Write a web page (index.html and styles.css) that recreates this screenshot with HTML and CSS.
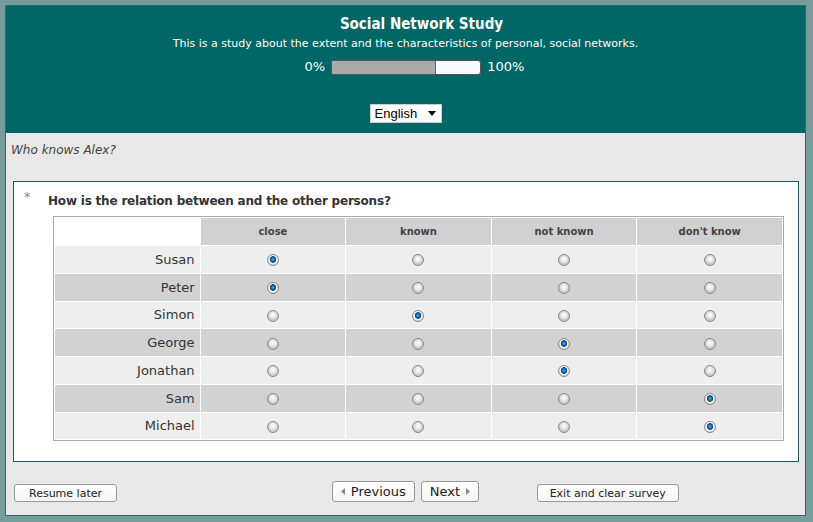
FILE: index.html
```html
<!DOCTYPE html>
<html>
<head>
<meta charset="utf-8">
<link rel="stylesheet" href="styles.css">
</head>
<body>
<div class="frame">
  <header class="head">
    <h1 class="title">Social Network Study</h1>
    <p class="desc">This is a study about the extent and the characteristics of personal, social networks.</p>
    <div class="progress">
      <span>0%</span>
      <div class="bar"><div class="fill" style="width:70%"></div></div>
      <span>100%</span>
    </div>
    <div class="lang">
      <span>English</span>
      <svg width="8" height="5" viewBox="0 0 8 5"><path d="M0 0h8L4 5z" fill="#000"/></svg>
    </div>
  </header>
  <main class="main">
    <p class="group">Who knows Alex?</p>
    <section class="qbox">
      <div class="qhead"><span class="star">*</span><span class="qtext">How is the relation between and the other persons?</span></div>
      <table class="grid">
        <thead>
          <tr><th class="blank"></th><th>close</th><th>known</th><th>not known</th><th>don't know</th></tr>
        </thead>
        <tbody>
          <tr class="odd"><td class="name">Susan</td><td><input type="radio" name="r1" checked></td><td><input type="radio" name="r1"></td><td><input type="radio" name="r1"></td><td><input type="radio" name="r1"></td></tr>
          <tr class="even"><td class="name">Peter</td><td><input type="radio" name="r2" checked></td><td><input type="radio" name="r2"></td><td><input type="radio" name="r2"></td><td><input type="radio" name="r2"></td></tr>
          <tr class="odd"><td class="name">Simon</td><td><input type="radio" name="r3"></td><td><input type="radio" name="r3" checked></td><td><input type="radio" name="r3"></td><td><input type="radio" name="r3"></td></tr>
          <tr class="even"><td class="name">George</td><td><input type="radio" name="r4"></td><td><input type="radio" name="r4"></td><td><input type="radio" name="r4" checked></td><td><input type="radio" name="r4"></td></tr>
          <tr class="odd"><td class="name">Jonathan</td><td><input type="radio" name="r5"></td><td><input type="radio" name="r5"></td><td><input type="radio" name="r5" checked></td><td><input type="radio" name="r5"></td></tr>
          <tr class="even"><td class="name">Sam</td><td><input type="radio" name="r6"></td><td><input type="radio" name="r6"></td><td><input type="radio" name="r6"></td><td><input type="radio" name="r6" checked></td></tr>
          <tr class="odd"><td class="name">Michael</td><td><input type="radio" name="r7"></td><td><input type="radio" name="r7"></td><td><input type="radio" name="r7"></td><td><input type="radio" name="r7" checked></td></tr>
        </tbody>
      </table>
    </section>
    <div class="nav">
      <div class="nav-left"><button class="btn small wide">Resume later</button></div>
      <div class="nav-mid">
        <button class="btn big"><svg width="4" height="7" viewBox="0 0 4 7"><path d="M4 0v7L0 3.5z" fill="#888"/></svg>Previous</button>
        <button class="btn big">Next<svg width="4" height="7" viewBox="0 0 4 7"><path d="M0 0v7l4-3.5z" fill="#888"/></svg></button>
      </div>
      <div class="nav-right"><button class="btn small">Exit and clear survey</button></div>
    </div>
  </main>
</div>
</body>
</html>
```
FILE: styles.css
```css
html, body { margin: 0; padding: 0; }
body {
  background: #769d9c;
  padding: 5px 7px 6px 5px;
  font-family: "DejaVu Sans", Verdana, sans-serif;
  height: 522px;
  box-sizing: border-box;
}
.frame {
  border: 1px solid #2f6a6a;
  background: #e8e8e8;
  height: 511px;
  box-sizing: border-box;
  display: flex;
  flex-direction: column;
}
.head {
  background: #006666;
  color: #fff;
  height: 127px;
  text-align: center;
  padding-top: 10px;
  box-sizing: border-box;
}
.title {
  margin: 0;
  padding-left: 32px;
  font-family: "DejaVu Sans Condensed", "DejaVu Sans", sans-serif;
  font-weight: bold;
  font-size: 15px;
  line-height: 16px;
}
.desc {
  margin: 5px 0 0;
  font-size: 11px;
  line-height: 14px;
  font-family: "DejaVu Sans", sans-serif;
}
.progress {
  margin-top: 8px;
  padding-left: 18px;
  display: flex;
  justify-content: center;
  align-items: center;
  gap: 6px;
  font-size: 13px;
  line-height: 16px;
  font-family: "DejaVu Sans", sans-serif;
}
.bar {
  width: 148px;
  height: 13px;
  border: 1px solid #555;
  border-radius: 3px;
  background: #f8f8ff;
  overflow: hidden;
}
.fill { height: 100%; background: #aaaaaa; border-right: 1px solid #666; box-sizing: border-box; }
.lang {
  margin: 29px auto 0;
  width: 72px;
  height: 19px;
  box-sizing: border-box;
  background: #fff;
  border: 1px solid #ccc;
  display: flex;
  align-items: center;
  justify-content: space-between;
  padding: 0 5px 0 4px;
  color: #000;
  font-family: "Liberation Sans", Arial, sans-serif;
  font-size: 13px;
}
.main { flex: 1; display: flex; flex-direction: column; }
.group {
  margin: 9px 0 0 5px;
  font-style: italic;
  font-size: 12px;
  line-height: 16px;
  color: #444;
}
.qbox {
  margin: 23px 6px 0 7px;
  background: #fff;
  border: 1px solid #175f5f;
  padding: 8px 15px 20px 39px;
}
.qhead { display: flex; align-items: flex-start; height: 26px; }
.star { color: #888; font-size: 13px; margin-left: -29px; width: 24px; line-height: 14px; }
.qtext { color: #333; font-weight: bold; font-size: 12px; line-height: 18px; padding-top: 2px; letter-spacing: -0.2px; }
.grid {
  width: 731px;
  table-layout: fixed;
  border: 1px solid #aaa;
  border-spacing: 1px;
  background: #fff;
}
.grid th, .grid td { padding: 0; text-align: center; }
.grid th {
  height: 27px;
  background: #d0d0d0;
  font-size: 10px;
  color: #444;
  font-weight: bold;
}
.grid th.blank { background: #fff; }
.grid td { height: 26.75px; }
.odd td { background: #eeeeee; }
.even td { background: #d2d2d2; }
.grid td.name {
  text-align: right;
  padding-right: 5px;
  font-size: 13px;
  color: #333;
}
.grid input {
  appearance: none;
  -webkit-appearance: none;
  margin: 0;
  width: 12px;
  height: 12px;
  border-radius: 50%;
  border: 1px solid #8a8a8a;
  box-sizing: border-box;
  vertical-align: middle;
  background: radial-gradient(circle at 50% 40%, #fff 0, #e6e6e6 3px, #c8c8c8 5px);
}
.grid input:checked {
  background: radial-gradient(circle at 50% 45%, #5fb4ee 0, #1a74b8 1.5px, #0a4a80 3px, #fff 3.6px, #fff 4px, #d8d8d8 5px);
}
.nav {
  display: grid;
  grid-template-columns: 1fr 1fr 1fr;
  align-items: center;
  height: 21px;
  margin-top: 19px;
}
.nav-left { padding-left: 8px; }
.nav-mid { display: flex; justify-content: center; gap: 6px; }
.nav-right { margin-left: -2px; }
.btn {
  background: linear-gradient(#fff, #f4f4f4);
  border: 1px solid #999;
  border-radius: 3px;
  color: #222;
  font-family: "DejaVu Sans", sans-serif;
  padding: 0;
  display: inline-flex;
  align-items: center;
  justify-content: center;
  gap: 6px;
}
.btn.small { font-size: 11px; height: 18px; padding: 0 12px; }
.btn.small.wide { padding: 0 14px; }
.btn.big { font-size: 13px; height: 21px; padding: 0 8px; }
```
